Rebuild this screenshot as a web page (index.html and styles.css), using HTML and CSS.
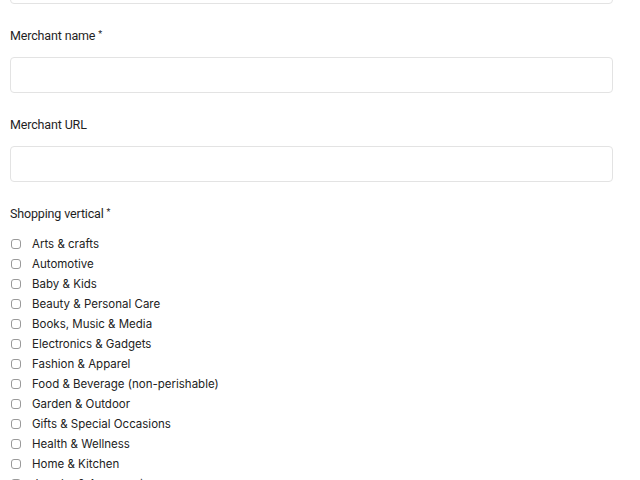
FILE: index.html
```html
<!DOCTYPE html>
<html lang="en">
  <head>
    <meta charset="UTF-8" />
    <meta name="viewport" content="width=device-width, initial-scale=1.0" />
    <title>Merchant details</title>
    <link rel="stylesheet" href="styles.css">
  </head>
  <body>
    <form class="form">
      <div class="field">
        <input class="input" type="text" />
      </div>

      <div class="field">
        <label class="label">Merchant name <span class="req">*</span></label>
        <input class="input" type="text" />
      </div>

      <div class="field">
        <label class="label">Merchant URL</label>
        <input class="input" type="text" />
      </div>

      <div class="field">
        <div class="label label-group">Shopping vertical <span class="req">*</span></div>
        <ul class="checks">
          <li><label><input type="checkbox" /> Arts &amp; crafts</label></li>
          <li><label><input type="checkbox" /> Automotive</label></li>
          <li><label><input type="checkbox" /> Baby &amp; Kids</label></li>
          <li><label><input type="checkbox" /> Beauty &amp; Personal Care</label></li>
          <li><label><input type="checkbox" /> Books, Music &amp; Media</label></li>
          <li><label><input type="checkbox" /> Electronics &amp; Gadgets</label></li>
          <li><label><input type="checkbox" /> Fashion &amp; Apparel</label></li>
          <li><label><input type="checkbox" /> Food &amp; Beverage (non-perishable)</label></li>
          <li><label><input type="checkbox" /> Garden &amp; Outdoor</label></li>
          <li><label><input type="checkbox" /> Gifts &amp; Special Occasions</label></li>
          <li><label><input type="checkbox" /> Health &amp; Wellness</label></li>
          <li><label><input type="checkbox" /> Home &amp; Kitchen</label></li>
          <li><label><input type="checkbox" /> Jewelry &amp; Accessories</label></li>
        </ul>
      </div>
    </form>
  </body>
</html>
```

FILE: styles.css
```css
body {
  font-family: Inter, 'Liberation Sans', sans-serif;
  margin: 0;
  padding: 0;
  background: #fff;
  color: #222;
  overflow: hidden;
}
.form {
  margin-top: -32px;
  padding: 0 27px 0 10px;
}
.field {
  margin-bottom: 24px;
}
.label {
  display: block;
  font-family: Roboto, 'Liberation Sans', sans-serif;
  font-size: 12.5px;
  line-height: 16px;
  letter-spacing: -0.15px;
  color: #1f1f1f;
  margin-bottom: 13px;
}
.label-group {
  margin-bottom: 12px;
}
.req {
  font-size: 9px;
  line-height: 0;
  vertical-align: 3px;
}
.input {
  display: block;
  box-sizing: border-box;
  width: 100%;
  height: 36px;
  border: 1px solid #e3e3e3;
  border-radius: 4px;
  background: #fff;
  outline: none;
}
.checks {
  list-style: none;
  margin: 0;
  padding: 0;
}
.checks li {
  height: 20px;
  display: flex;
  align-items: center;
  font-size: 11.5px;
}
.checks label {
  display: flex;
  align-items: center;
}
.checks input {
  appearance: none;
  width: 10px;
  height: 10px;
  margin: 0 11px 0 1px;
  border: 1px solid #9a9a9a;
  border-radius: 3px;
  background: #fff;
}
```
